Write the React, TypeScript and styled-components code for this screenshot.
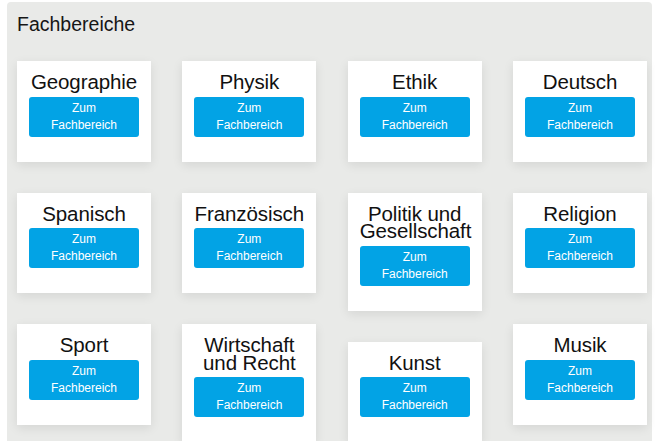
import React from "react";
import styled, { createGlobalStyle } from "styled-components";

const GlobalStyle = createGlobalStyle`
  html, body {
    margin: 0;
    padding: 0;
    background: #ffffff;
    font-family: "Liberation Sans", Arial, sans-serif;
  }
`;

const Page = styled.div`
  padding: 2px 3px 0 7px;
`;

const Panel = styled.section`
  background: #e9eae8;
  border-radius: 4px 4px 0 0;
  padding: 11px 5px 20px 10px;
  min-height: 460px;
`;

const Heading = styled.h2`
  margin: 0 0 26px 0;
  font-size: 19.5px;
  line-height: 22px;
  font-weight: normal;
  color: #161616;
`;

const Columns = styled.div`
  display: grid;
  grid-template-columns: repeat(4, 134px);
  justify-content: space-between;
  width: 630px;
`;

const Column = styled.div`
  display: flex;
  flex-direction: column;
  gap: 31px;
`;

const Card = styled.div`
  background: #ffffff;
  padding: 12px 12px 25px;
  box-shadow: 0 3px 10px rgba(0, 0, 0, 0.09);
  display: flex;
  flex-direction: column;
  align-items: stretch;
`;

const Title = styled.h3`
  margin: 0 0 6px 0;
  font-size: 20.5px;
  line-height: 17.5px;
  font-weight: normal;
  color: #111111;
  text-align: center;
  letter-spacing: -0.1px;
`;

const Button = styled.a`
  display: block;
  background: #02a3e5;
  color: #ffffff;
  border-radius: 3px;
  padding: 3px 2px;
  font-size: 12px;
  line-height: 17px;
  text-align: center;
  text-decoration: none;
  cursor: pointer;
`;

const columns: string[][] = [
  ["Geographie", "Spanisch", "Sport"],
  ["Physik", "Französisch", "Wirtschaft und Recht"],
  ["Ethik", "Politik und Gesellschaft", "Kunst"],
  ["Deutsch", "Religion", "Musik"],
];

export default function App() {
  return (
    <>
      <GlobalStyle />
      <Page>
        <Panel>
          <Heading>Fachbereiche</Heading>
          <Columns>
            {columns.map((col, i) => (
              <Column key={i}>
                {col.map((name) => (
                  <Card key={name}>
                    <Title>{name}</Title>
                    <Button>
                      Zum
                      <br />
                      Fachbereich
                    </Button>
                  </Card>
                ))}
              </Column>
            ))}
          </Columns>
        </Panel>
      </Page>
    </>
  );
}
